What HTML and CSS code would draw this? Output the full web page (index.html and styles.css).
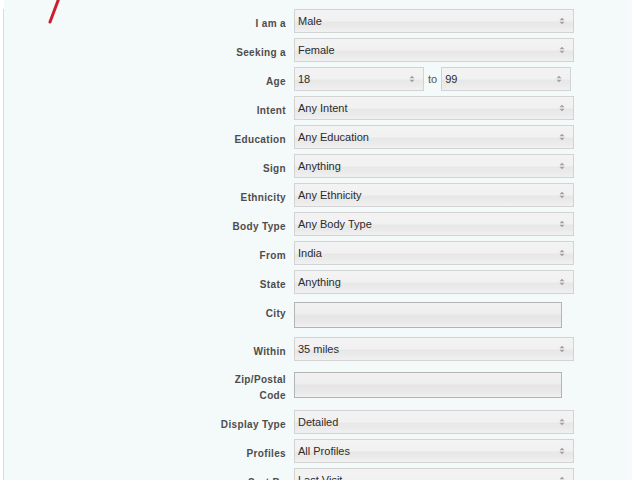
FILE: index.html
```html
<!DOCTYPE html>
<html lang="en">
<head>
  <meta charset="UTF-8">
  <title>Search</title>
  <link rel="stylesheet" href="styles.css">
</head>
<body>
  <div class="page">
    <!-- trazo rojo del logo, recortado arriba -->
    <svg class="logo-stroke" width="20" height="26" viewBox="0 0 20 26">
      <line x1="15" y1="-2" x2="6" y2="22" stroke="#cc1f2d" stroke-width="3" stroke-linecap="round"/>
    </svg>

    <form class="search-form">
      <div class="row">
        <label>I am a</label>
        <select><option>Male</option></select>
      </div>
      <div class="row">
        <label>Seeking a</label>
        <select><option>Female</option></select>
      </div>
      <div class="row">
        <label>Age</label>
        <select class="small"><option>18</option></select>
        <span class="to">to</span>
        <select class="small"><option>99</option></select>
      </div>
      <div class="row">
        <label>Intent</label>
        <select><option>Any Intent</option></select>
      </div>
      <div class="row">
        <label>Education</label>
        <select><option>Any Education</option></select>
      </div>
      <div class="row">
        <label>Sign</label>
        <select><option>Anything</option></select>
      </div>
      <div class="row">
        <label>Ethnicity</label>
        <select><option>Any Ethnicity</option></select>
      </div>
      <div class="row">
        <label>Body Type</label>
        <select><option>Any Body Type</option></select>
      </div>
      <div class="row">
        <label>From</label>
        <select><option>India</option></select>
      </div>
      <div class="row">
        <label>State</label>
        <select><option>Anything</option></select>
      </div>
      <div class="row">
        <label>City</label>
        <input type="text" class="city">
      </div>
      <div class="row">
        <label>Within</label>
        <select><option>35 miles</option></select>
      </div>
      <div class="row">
        <label class="two-lines">Zip/Postal<br>Code</label>
        <input type="text" class="zip">
      </div>
      <div class="row">
        <label>Display Type</label>
        <select><option>Detailed</option></select>
      </div>
      <div class="row">
        <label>Profiles</label>
        <select><option>All Profiles</option></select>
      </div>
      <div class="row">
        <label>Sort By</label>
        <select><option>Last Visit</option></select>
      </div>
    </form>
  </div>
</body>
</html>
```

FILE: styles.css
```css
html, body {
  margin: 0;
  padding: 0;
  background-color: #fff;
  height: 100%;
  overflow: hidden;
}
/* Panel gris azulado que ocupa casi todo el ancho */
.page {
  position: relative;
  margin-left: 3px;
  margin-right: 5px;
  height: 100%;
  background-color: #f4f9fa;
  border-left: 1px solid #dcdcdc;
  box-shadow: 5px 0 0 #f7f9fb;
}
/* el borde izquierdo empieza un poco mas abajo */
.page::before {
  content: "";
  position: absolute;
  top: 0;
  left: -1px;
  width: 1px;
  height: 9px;
  background-color: #fff;
}
.logo-stroke {
  position: absolute;
  top: 0;
  left: 40px;
}
/* Formulario de busqueda */
.search-form {
  padding-top: 9px;
  font-family: "Liberation Sans", Arial, sans-serif;
}
.row {
  display: flex;
  align-items: flex-start;
  margin-bottom: 5px;
}
.row label {
  width: 282px;
  flex-shrink: 0;
  margin-right: 8px;
  padding-top: 7px;
  text-align: right;
  font-size: 10px;
  font-weight: bold;
  line-height: 16px;
  letter-spacing: 0.35px;
  color: #4d4d4d;
}
.row label.two-lines {
  padding-top: 6px;
  padding-bottom: 1px;
}
select {
  -webkit-appearance: none;
  appearance: none;
  box-sizing: border-box;
  width: 280px;
  height: 24px;
  margin: 0;
  padding: 0 20px 0 3px;
  border: 1px solid #d3d3d3;
  border-radius: 0;
  font-family: "Liberation Sans", Arial, sans-serif;
  font-size: 11px;
  color: #2b2b2b;
  background-color: #eee;
  background-image:
    url("data:image/svg+xml,%3Csvg xmlns='http://www.w3.org/2000/svg' width='6' height='8'%3E%3Cpath d='M0.5 3.2 L3 0.8 L5.5 3.2Z M0.5 4.8 L3 7.2 L5.5 4.8Z' fill='%23a0a0a0'/%3E%3C/svg%3E"),
    linear-gradient(#f3f3f3 0%, #f1f1f1 50%, #e7e7e7 55%, #ebebeb 80%, #f1f1f1 100%);
  background-repeat: no-repeat, no-repeat;
  background-position: right 8px center, 0 0;
}
select.small {
  width: 130px;
}
.to {
  margin: 0 4px;
  padding-top: 6px;
  font-size: 11px;
  line-height: 13px;
  color: #555;
}
input[type="text"] {
  box-sizing: border-box;
  width: 268px;
  height: 26px;
  margin: 0;
  padding: 0 3px;
  border: 1px solid #b4b4b4;
  border-radius: 0;
  font-family: "Liberation Sans", Arial, sans-serif;
  font-size: 11px;
  background-image: linear-gradient(#f1f1f1 0%, #eeeeee 45%, #e6e6e6 50%, #e9e9e9 80%, #f0f0f0 100%);
}
input.city {
  margin-top: 3px;
  margin-bottom: 4px;
}
input.zip {
  margin-top: 6px;
}
```
